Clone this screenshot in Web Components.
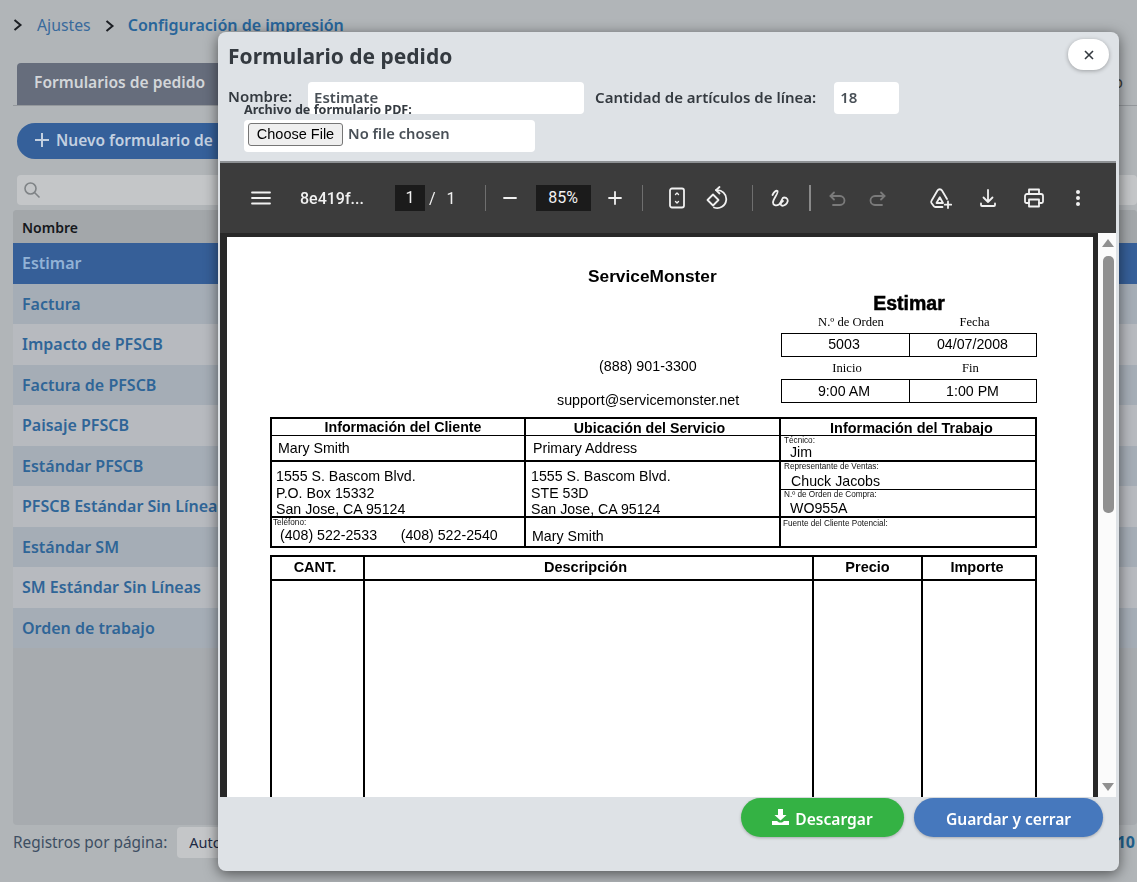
<!DOCTYPE html>
<html lang="es">
<head>
<meta charset="utf-8">
<title>Configuración de impresión</title>
<style>
  html, body { margin: 0; height: 882px; overflow: hidden; }
  body { background: #b1b5b8; font-family: "Noto Sans", sans-serif; }
</style>
</head>
<body>
<settings-page></settings-page>
<order-modal></order-modal>

<script>
// small helper, every element just stamps its own template into an open shadow root
function define(name, html) {
    const template = document.createElement("template");
    template.innerHTML = html;
    customElements.define(name, class extends HTMLElement {
        constructor() {
            super();
            this.root = this.attachShadow({ mode: "open" });
            this.root.appendChild(template.content.cloneNode(true));
        }
    });
}

const chevron = `<svg width="10" height="12" viewBox="0 0 10 12" fill="none" stroke="#1c1f24" stroke-width="2"><path d="M1.500 1 7.500 6l-6 5"/></svg>`;

// ---------- page behind the modal ----------
define("list-row", `
    <style>
    :host {
        display: flex;
        align-items: center;
        height: 40.5px;
        padding-left: 9px;
        font-size: 16px;
        font-weight: 600;
        color: #2f6597;
        background: #b7babf;
        white-space: nowrap;
    }
    :host([striped]) { background: #a5adb6; }
    :host([active]) { background: #365f98; color: #92b2d6; }
    </style>
    <slot></slot>
`);

define("settings-page", `
    <style>
    :host {
        display: block;
        height: 882px;
        overflow: hidden;
        position: relative;
    }
    .crumbs {
        display: flex;
        align-items: center;
        height: 24px;
        padding: 13px 0 1px 13px;
        font-size: 15.8px;
        color: #386a9c;
        white-space: nowrap;
    }
    .crumbs svg { flex: none; }
    .crumbs b { font-size: 16.05px; font-weight: 600; color: #28659a; }
    .tabs {
        display: flex;
        height: 42px;
        margin: 25px 0 0 13px;
        padding: 0 14px 0 4px;
        border-bottom: 1px solid #94989c;
    }
    .tab {
        width: 250px;
        height: 42px;
        box-sizing: border-box;
        padding: 8px 0 0 17px;
        background: #666d7c;
        border-radius: 4px 4px 0 0;
        color: #d3d6d9;
        font-size: 15.6px;
        font-weight: 600;
    }
    .other { margin-left: auto; padding-top: 8px; font-size: 15.6px; color: #3b3a36; }
    .new {
        display: flex;
        align-items: center;
        gap: 7px;
        width: 300px;
        height: 36px;
        margin: 17px 0 0 17px;
        padding: 0 0 2px 18px;
        box-sizing: border-box;
        background: #35609a;
        border-radius: 18px;
        color: #c3d0e0;
        font-size: 15.5px;
        font-weight: 600;
        white-space: nowrap;
    }
    .search {
        display: flex;
        align-items: center;
        height: 30px;
        margin: 16px 0 0 17px;
        padding-left: 6px;
        background: #c4c6c8;
        border-radius: 4px;
    }
    .table {
        height: 615px;
        margin: 5px 0 0 13px;
        background: #a7abaf;
        border-radius: 4px;
    }
    .head {
        height: 33px;
        padding-left: 9px;
        font-size: 14px;
        font-weight: 600;
        line-height: 35px;
        color: #15181c;
        background: #a3a7aa;
        border-radius: 4px 4px 0 0;
    }
    .foot {
        display: flex;
        align-items: center;
        height: 32px;
        margin: 1px 2px 0 13px;
        font-size: 15.4px;
        color: #3d4e62;
        white-space: nowrap;
    }
    .select {
        width: 120px;
        height: 31px;
        margin-left: 10px;
        padding-left: 12px;
        line-height: 31px;
        background: #c4c6c8;
        border-radius: 4px;
        color: #1d2a44;
        font-size: 14.5px;
    }
    .count { margin-left: auto; font-weight: 700; font-size: 16px; color: #1f5f8b; }
    </style>
    <nav class="crumbs">
        ${chevron}
        <a style="margin-left:14px">Ajustes</a>
        <span style="margin:2px 13px 0 14px;display:flex">${chevron}</span>
        <b>Configuración de impresión</b>
    </nav>
    <div class="tabs"><div class="tab">Formularios de pedido</div><span class="other">o</span></div>
    <div class="new">
        <svg width="14" height="14" viewBox="0 0 14 14" stroke="#c3d0e0" stroke-width="2"><path d="M7 0v14M0 7h14"/></svg>
        Nuevo formulario de
    </div>
    <div class="search">
        <svg width="18" height="18" viewBox="0 0 18 18" fill="none" stroke="#7f8386" stroke-width="1.6"><circle cx="7.5" cy="7.5" r="5.5"/><path d="m11.5 11.5 5 5"/></svg>
    </div>
    <div class="table">
        <div class="head">Nombre</div>
        <list-row active>Estimar</list-row>
        <list-row striped>Factura</list-row>
        <list-row>Impacto de PFSCB</list-row>
        <list-row striped>Factura de PFSCB</list-row>
        <list-row>Paisaje PFSCB</list-row>
        <list-row striped>Estándar PFSCB</list-row>
        <list-row>PFSCB Estándar Sin Líneas</list-row>
        <list-row striped>Estándar SM</list-row>
        <list-row>SM Estándar Sin Líneas</list-row>
        <list-row striped>Orden de trabajo</list-row>
    </div>
    <div class="foot">
        Registros por página:
        <div class="select">Auto</div>
        <span class="count">10</span>
    </div>
`);

// ---------- pdf toolbar ----------
define("tool-icon", `
    <style>
    :host {
        display: flex;
        align-items: center;
        justify-content: center;
        width: 24px;
        height: 24px;
        flex: none;
        color: #f1f1f1;
    }
    :host([off]) { color: #7a7a7a; }
    ::slotted(svg) {
        width: 24px;
        height: 24px;
        fill: none;
        stroke: currentColor;
        stroke-width: 1.8;
        stroke-linecap: round;
        stroke-linejoin: round;
    }
    </style>
    <slot></slot>
`);

define("pdf-toolbar", `
    <style>
    :host {
        display: flex;
        align-items: center;
        height: 70px;
        background: #3c3c3c;
        color: #f1f1f1;
        font-family: Roboto, sans-serif;
        font-size: 16px;
        white-space: nowrap;
    }
    .name { width: 70px; margin-left: 27px; font-weight: 500; }
    .box {
        height: 26px;
        line-height: 26px;
        text-align: center;
        background: #1b1b1b;
    }
    .sep { width: 1px; height: 26px; background: #6f6f6f; flex: none; }
    .sep.thick { width: 2px; background: #8a8a8a; }
    </style>
    <tool-icon style="margin-left:29px"><svg viewBox="0 0 24 24"><path d="M3 6.500h18M3 12h18M3 17.500h18"/></svg></tool-icon>
    <span class="name">8e419f...</span>
    <span class="box" style="width:30px;margin-left:25px">1</span>
    <span style="margin-left:4px">/</span>
    <span style="margin-left:11px">1</span>
    <span class="sep" style="margin-left:29px"></span>
    <tool-icon style="margin-left:12px"><svg viewBox="0 0 24 24"><path d="M6 12h12"/></svg></tool-icon>
    <span class="box" style="width:55px;margin-left:14px">85%</span>
    <tool-icon style="margin-left:12px"><svg viewBox="0 0 24 24"><path d="M6 12h12M12 6v12"/></svg></tool-icon>
    <span class="sep" style="margin-left:15px"></span>
    <tool-icon style="margin-left:22px"><svg viewBox="0 0 24 24"><rect x="5" y="2.500" width="14" height="19" rx="2"/><path d="m10.500 8.500 1.500-1.500 1.500 1.500M10.500 15.500l1.500 1.500 1.500-1.500" stroke-width="1.400"/></svg></tool-icon>
    <tool-icon style="margin-left:16px"><svg viewBox="0 0 24 24"><path d="m2.500 14 5.500-5.500 5.500 5.500-5.500 5.500z"/><path d="M11 4.200A9 9 0 1 1 9 21.500"/><path d="M14.500 1 11 4.200l3.500 3.300"/></svg></tool-icon>
    <span class="sep" style="margin-left:23px"></span>
    <tool-icon style="margin-left:15px"><svg viewBox="0 0 24 24"><path d="M4.500 9C6 6 8 4 9.500 5 11 6.500 5 13 5 16.500 5 19 8 20.500 11 18.500c3-2.500 2.500-7 5-7 3 0 5 2.500 3 5.500-1.500 2.500-5 3.500-6 2-.6-1 .5-3 2-4"/></svg></tool-icon>
    <span class="sep thick" style="margin-left:17px"></span>
    <tool-icon off style="margin-left:14px"><svg viewBox="0 0 24 24"><path d="M9 6.500 5.500 10 9 13.500"/><path d="M5.500 10H15a4.500 4.500 0 0 1 0 9H8"/></svg></tool-icon>
    <tool-icon off style="margin-left:17px"><svg viewBox="0 0 24 24"><path d="M15 6.500 18.500 10 15 13.500"/><path d="M18.500 10H9a4.500 4.500 0 0 0 0 9h7"/></svg></tool-icon>
    <tool-icon style="margin-left:38px"><svg viewBox="0 0 24 24"><path d="M14.500 21H7.500c-1 0-1.500-.5-2-1.300L3.500 17c-.5-.8-.5-1.500 0-2.300L9.500 4.500c1-1.700 3.500-1.700 4.500 0L19 13"/><path d="M8.500 17H15l-3.200-5.800z"/><path d="M20 15.500V22M16.800 18.700h6.500"/></svg></tool-icon>
    <tool-icon style="margin-left:24px"><svg viewBox="0 0 24 24"><path d="M12 4v12M7.500 11.500 12 16l4.500-4.500M5 17.500V19a1 1 0 0 0 1 1h12a1 1 0 0 0 1-1v-1.500"/></svg></tool-icon>
    <tool-icon style="margin-left:22px"><svg viewBox="0 0 24 24"><path d="M7 8V3.500h10V8"/><path d="M7 17H4.500A1.500 1.500 0 0 1 3 15.500V10a2 2 0 0 1 2-2h14a2 2 0 0 1 2 2v5.500a1.500 1.500 0 0 1-1.500 1.500H17"/><path d="M7 13.500h10v7H7z"/></svg></tool-icon>
    <tool-icon style="margin-left:20px"><svg viewBox="0 0 24 24" style="fill:currentColor;stroke:none"><circle cx="12" cy="6" r="2"/><circle cx="12" cy="12" r="2"/><circle cx="12" cy="18" r="2"/></svg></tool-icon>
`);

// ---------- one box of the form on the pdf ----------
define("form-cell", `
    <style>
    :host {
        display: block;
        box-sizing: border-box;
        height: var(--h, 25px);
        border-bottom: var(--line, 2px) solid #000;
        padding: var(--pad, 3px 0 0 5px);
        font-size: 14.2px;
        line-height: 16.5px;
        color: #000;
        overflow: hidden;
    }
    :host(:last-child) { border-bottom: 0; }
    :host([head]) {
        font-weight: 700;
        text-align: center;
        --line: 1px;
    }
    </style>
    <slot name="tiny"></slot>
    <slot></slot>
`);

define("pdf-page", `
    <style>
    :host {
        display: block;
        width: 866px;
        height: 560px;
        box-sizing: border-box;
        padding: 29px 0 0 43px;
        background: #fff;
        color: #000;
        font-family: "Liberation Sans", Arial, sans-serif;
        overflow: hidden;
    }
    .brand { height: 20px; padding-left: 318px; font-size: 17.3px; font-weight: 700; line-height: 20px; }
    .top { display: flex; width: 767px; height: 109px; margin-top: 8px; }
    .contact { width: 511px; font-size: 14.3px; line-height: 18px; }
    .contact div:first-child { padding: 63px 0 16px 329px; }
    .contact div:last-child { padding-left: 287px; }
    .order { width: 256px; }
    .order h2 {
        margin: 0;
        height: 20px;
        font-size: 19.5px;
        line-height: 18px;
        text-align: center;
        -webkit-text-stroke: .5px #000;
    }
    .labels { display: grid; grid-template-columns: 128px 128px; height: 19px; font: 12.6px/16px "Liberation Serif", serif; text-align: center; }
    .vals {
        display: grid;
        grid-template-columns: 128px 128px;
        height: 24px;
        box-sizing: border-box;
        border: 1px solid #000;
        font-size: 14.2px;
        line-height: 21px;
        text-align: center;
    }
    .vals span { padding-right: 3px; }
    .vals span:first-child { border-right: 1px solid #000; }
    .info {
        display: grid;
        grid-template-columns: 252px 255px 1fr;
        width: 767px;
        height: 131px;
        box-sizing: border-box;
        border: 2px solid #000;
        margin-top: 14px;
    }
    .info > div + div { border-left: 2px solid #000; }
    .lines {
        display: grid;
        grid-template-columns: 91px 449px 109px 1fr;
        grid-template-rows: 24px 272px;
        width: 767px;
        height: 300px;
        box-sizing: border-box;
        border: 2px solid #000;
        margin-top: 7px;
    }
    .lines .th {
        border-bottom: 2px solid #000;
        font-size: 14.5px;
        font-weight: 700;
        line-height: 21px;
        text-align: center;
    }
    .lines .th + .th { border-left: 2px solid #000; }
    .col { border-left: 2px solid #000; }
    .tiny { display: block; font-size: 8.2px; line-height: 9px; color: #111; }
    </style>
    <div class="brand">ServiceMonster</div>
    <div class="top">
        <div class="contact">
            <div>(888) 901-3300</div>
            <div>support@servicemonster.net</div>
        </div>
        <div class="order">
            <h2>Estimar</h2>
            <div class="labels"><span style="padding-left:12px">N.º de Orden</span><span style="padding-left:3px">Fecha</span></div>
            <div class="vals"><span>5003</span><span>04/07/2008</span></div>
            <div class="labels" style="height:22px;padding-top:3px;box-sizing:border-box"><span style="padding-left:4px">Inicio</span><span style="padding-right:5px">Fin</span></div>
            <div class="vals" style="line-height:22px"><span>9:00 AM</span><span>1:00 PM</span></div>
        </div>
    </div>
    <div class="info">
        <div>
            <form-cell head style="--h:17px;--pad:0 0 0 10px">Información del Cliente</form-cell>
            <form-cell style="--h:26px;--pad:4px 0 0 6px">Mary Smith</form-cell>
            <form-cell style="--h:56px;--pad:6px 0 0 4px">1555 S. Bascom Blvd.<br>P.O. Box 15332<br>San Jose, CA 95124</form-cell>
            <form-cell style="--pad:0 0 0 1px;--h:30px"><span class="tiny" slot="tiny">Teléfono:</span><span style="padding-left:7px;white-space:pre">(408) 522-2533      (408) 522-2540</span></form-cell>
        </div>
        <div>
            <form-cell head style="--h:17px;--pad:1px 6px 0 0">Ubicación del Servicio</form-cell>
            <form-cell style="--h:26px;--pad:4px 0 0 7px">Primary Address</form-cell>
            <form-cell style="--h:56px;--pad:6px 0 0 5px">1555 S. Bascom Blvd.<br>STE 53D<br>San Jose, CA 95124</form-cell>
            <form-cell style="--h:30px;--pad:10px 0 0 6px">Mary Smith</form-cell>
        </div>
        <div>
            <form-cell head style="--h:17px;--pad:1px 0 0 7px"><span style="font-size:14.45px">Información del Trabajo</span></form-cell>
            <form-cell style="--h:26px;--pad:0 0 0 3px"><span class="tiny" slot="tiny">Técnico:</span><span style="display:block;margin-top:-1px;padding-left:6px">Jim</span></form-cell>
            <form-cell style="--h:28px;--line:1px;--pad:0 0 0 3px"><span class="tiny" slot="tiny">Representante de Ventas:</span><span style="display:block;padding:2px 0 0 7px">Chuck Jacobs</span></form-cell>
            <form-cell style="--h:28px;--pad:0 0 0 3px"><span class="tiny" slot="tiny">N.º de Orden de Compra:</span><span style="display:block;padding:1px 0 0 6px">WO955A</span></form-cell>
            <form-cell style="--h:30px;--pad:1px 0 0 2px"><span class="tiny" slot="tiny">Fuente del Cliente Potencial:</span></form-cell>
        </div>
    </div>
    <div class="lines">
        <div class="th" style="padding-right:5px">CANT.</div>
        <div class="th" style="padding-right:6px">Descripción</div>
        <div class="th">Precio</div>
        <div class="th" style="padding-right:4px">Importe</div>
        <span></span><span class="col"></span><span class="col"></span><span class="col"></span>
    </div>
`);

define("pdf-viewer", `
    <style>
    :host {
        display: block;
        height: 634px;
        margin-left: 2px;
        margin-right: 3px;
        border-top: 2px solid #8e9194;
        background: #282828;
        overflow: hidden;
    }
    .body { display: flex; height: 564px; }
    .canvas { width: 878px; padding: 4px 0 0 7px; box-sizing: border-box; background: #282828; }
    .bar {
        position: relative;
        flex: 1;
        background: #fbfbfb;
    }
    .thumb {
        position: absolute;
        left: 5px;
        top: 23px;
        width: 11px;
        height: 257px;
        background: #909090;
        border-radius: 5px;
    }
    .up, .down {
        position: absolute;
        left: 4px;
        width: 0;
        height: 0;
        border-left: 6px solid transparent;
        border-right: 6px solid transparent;
    }
    .up { top: 6px; border-bottom: 8px solid #909090; }
    .down { top: 550px; border-top: 8px solid #909090; }
    </style>
    <pdf-toolbar></pdf-toolbar>
    <div class="body">
        <div class="canvas"><pdf-page></pdf-page></div>
        <div class="bar"><i class="up"></i><i class="thumb"></i><i class="down"></i></div>
    </div>
`);

// ---------- modal ----------
define("order-modal", `
    <style>
    :host {
        position: fixed;
        left: 218px;
        top: 32px;
        width: 901px;
        height: 839px;
        background: #dee2e6;
        border-radius: 8px;
        box-shadow: 0 3px 14px rgba(0, 0, 0, .55);
        font-family: "Noto Sans", sans-serif;
        color: #343a40;
        overflow: hidden;
    }
    .head { height: 129px; position: relative; }
    h1 {
        margin: 0;
        padding: 8px 0 0 10px;
        height: 34px;
        font-size: 21px;
        font-weight: 700;
        line-height: 33px;
    }
    .row {
        display: flex;
        align-items: center;
        height: 32px;
        margin-top: 8px;
        padding-left: 10px;
        font-size: 15px;
        font-weight: 600;
        white-space: nowrap;
    }
    .row > span:not(.field) { padding-bottom: 2px; }
    .row > span.name { padding-bottom: 4px; }
    .field {
        height: 32px;
        box-sizing: border-box;
        padding: 5px 0 0 6px;
        background: #fff;
        border-radius: 4px;
        color: #495057;
    }
    .pdf-label {
        height: 14px;
        margin: -11px 0 0 26px;
        font-size: 12.6px;
        font-weight: 700;
        line-height: 14px;
        position: relative;
    }
    .file {
        display: flex;
        align-items: center;
        width: 291px;
        height: 32px;
        margin: 3px 0 0 26px;
        background: #fff;
        border-radius: 4px;
        font-size: 14.7px;
        font-weight: 600;
        color: #495057;
    }
    .file span { padding-bottom: 6px; }
    .file button {
        width: 95px;
        height: 23px;
        margin: 0 5px 4px 4px;
        padding: 0;
        background: #efefef;
        border: 1px solid #767676;
        border-radius: 3px;
        color: #000;
        font: 14.5px "Liberation Sans", Arial, sans-serif;
    }
    .close {
        position: absolute;
        right: 10px;
        top: 7px;
        width: 41px;
        height: 31px;
        display: flex;
        align-items: center;
        justify-content: center;
        background: #fff;
        border-radius: 16px;
        box-shadow: 0 1px 4px rgba(0, 0, 0, .3);
    }
    .foot {
        display: flex;
        justify-content: flex-end;
        gap: 10px;
        padding: 1px 16px 0 0;
    }
    .btn {
        display: flex;
        align-items: center;
        justify-content: center;
        gap: 6px;
        height: 39px;
        padding-top: 2px;
        box-sizing: border-box;
        border-radius: 20px;
        color: #fff;
        font-size: 15.6px;
        font-weight: 600;
        box-shadow: 0 1px 3px rgba(0, 0, 0, .25);
    }
    .green { width: 163px; background: #34b244; }
    .blue { width: 189px; background: #4678bd; }
    </style>
    <div class="head">
        <h1>Formulario de pedido</h1>
        <div class="close"><svg width="10" height="10" viewBox="0 0 10 10" stroke="#343a40" stroke-width="1.6"><path d="m1 1 8 8M9 1 1 9"/></svg></div>
        <div class="row">
            <span class="name">Nombre:</span>
            <span class="field" style="width:276px;margin-left:16px">Estimate</span>
            <span style="margin-left:11px">Cantidad de artículos de línea:</span>
            <span class="field" style="width:65px;margin-left:18px">18</span>
        </div>
        <div class="pdf-label">Archivo de formulario PDF:</div>
        <div class="file"><button>Choose File</button><span>No file chosen</span></div>
    </div>
    <pdf-viewer></pdf-viewer>
    <div class="foot">
        <div class="btn green">
            <svg width="17" height="16" viewBox="0 0 17 16" fill="#fff" style="margin-bottom:3px"><path d="M6 0h5v6h3.500L8.500 11.500 2.500 6H6z"/><path d="M0 12h5l2 1.500h3l2-1.500h5v4H0z"/></svg>
            Descargar
        </div>
        <div class="btn blue">Guardar y cerrar</div>
    </div>
`);
</script>
</body>
</html>
